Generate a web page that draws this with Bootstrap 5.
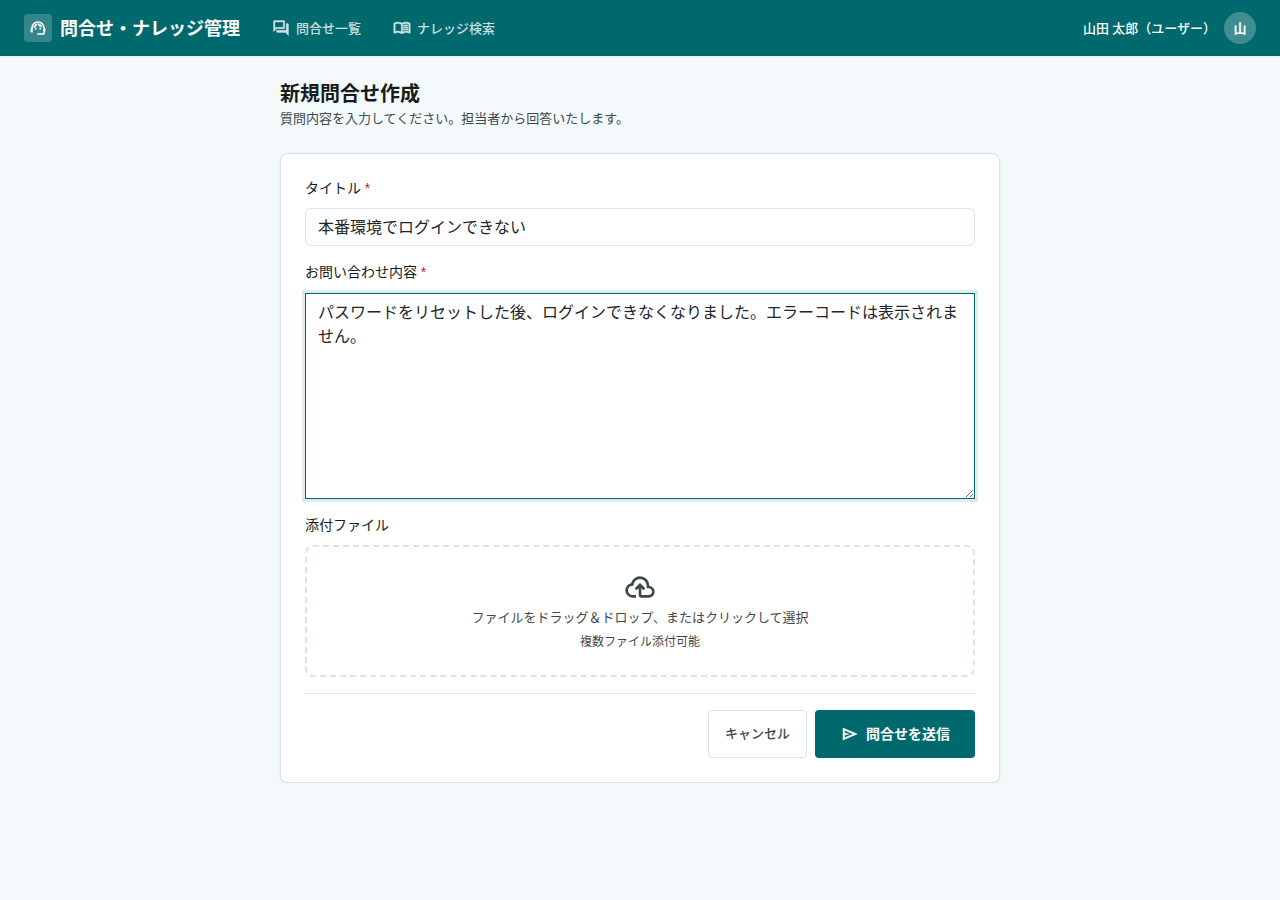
<!DOCTYPE html>
<html lang="ja">
<head>
<meta charset="utf-8">
<meta name="viewport" content="width=device-width, initial-scale=1">
<title>新規問合せ作成</title>
<link rel="stylesheet" href="https://cdn.jsdelivr.net/npm/bootstrap@5.3.0/dist/css/bootstrap.min.css">
<style>
  :root { --teal: #00696e; --ink: #161d1d; --ink-soft: #3f4849; --line: #dae4e4; }
  body { font-family: "Noto Sans", "Noto Sans CJK JP", sans-serif; background: #f4f9fc; color: var(--ink); line-height: 1.6; font-size: 14px; }
  svg { fill: currentColor; flex: none; display: block; }
  .topbar { height: 56px; background: var(--teal); box-shadow: 0 1px 2px rgba(0,0,0,.08); }
  .brand-mark { width: 28px; height: 28px; border-radius: 4px; background: rgba(255,255,255,.2); }
  .brand-name { font-size: 18px; font-weight: 700; }
  .menu-link { gap: 6px; font-size: 13px; font-weight: 500; color: rgba(255,255,255,.8); }
  .menu-link svg { stroke: currentColor; stroke-width: .4; }
  .menu-link svg.book { stroke-width: 18; }
  .user-name { font-size: 13px; font-weight: 500; }
  .avatar { width: 32px; height: 32px; font-size: 13px; font-weight: 700; background: rgba(255,255,255,.25); }
  .page { max-width: 720px; }
  .page-title { font-size: 20px; line-height: 27px; font-weight: 700; margin-bottom: 1px; }
  .page-sub { font-size: 13px; color: var(--ink-soft); }
  .panel { border-color: var(--line) !important; border-radius: 8px; box-shadow: 0 1px 3px rgba(0,0,0,.1); }
  .form-label { display: block; font-size: 14px; line-height: 20px; margin-bottom: 10.400px; }
  .req { color: #ba1a1a; font-family: "Liberation Sans", sans-serif; line-height: 1; }
  .form-control { border-color: var(--line); color: #212529; }
  textarea.form-control, textarea.form-control:focus { border-radius: 0; border-color: var(--teal); box-shadow: 0 0 0 3px rgba(0,105,110,.13); color: #212529; }
  .dropzone { border: 2px dashed var(--line); border-radius: 8px; color: var(--ink-soft); font-size: 13px; }
  .dropzone small { font-size: 12px; display: block; }
  .actions { border-top: 1px solid var(--line); }
  .btn { height: 48px; border-radius: 4px; }
  .btn-cancel, .btn-cancel:hover { font-size: 13px; font-weight: 500; background: #fff; color: var(--ink-soft); border-color: var(--line); padding: 0 16px; }
  .btn-send, .btn-send:hover { font-size: 14px; font-weight: 700; background: var(--teal); color: #fff; padding: 0 24px; }
  .btn-send svg { stroke: currentColor; stroke-width: .6; }
</style>
</head>
<body>
<header class="topbar d-flex align-items-center px-4 text-white">
  <div class="d-flex align-items-center gap-2">
    <span class="brand-mark d-flex align-items-center justify-content-center">
      <svg width="18" height="18" viewBox="0 0 24 24"><path d="M21 12.22C21 6.73 16.74 3 12 3c-4.69 0-9 3.65-9 9.28-.6.34-1 .98-1 1.72v2c0 1.1.9 2 2 2h1v-6.1c0-3.87 3.13-7 7-7s7 3.13 7 7V19h-8v2h8c1.1 0 2-.9 2-2v-1.22c.59-.31 1-.92 1-1.64v-2.3c0-.7-.41-1.31-1-1.62z"/><circle cx="9" cy="13" r="1.200"/><circle cx="15" cy="13" r="1.200"/><path d="M18 11.03C17.52 8.18 15.04 6 12.05 6c-3.03 0-6.29 2.51-6.03 6.45 2.47-1.01 4.33-3.21 4.86-5.89 1.31 2.63 4 4.44 7.12 4.47z"/></svg>
    </span>
    <span class="brand-name">問合せ・ナレッジ管理</span>
  </div>
  <nav class="d-flex gap-3 ms-4">
    <a href="#" class="menu-link d-flex align-items-center px-2 text-decoration-none">
      <svg width="18" height="18" viewBox="0 0 24 24"><path d="M15 4v7H5.17L4 12.17V4h11m1-2H3c-.55 0-1 .45-1 1v14l4-4h10c.55 0 1-.45 1-1V3c0-.55-.45-1-1-1zm5 4h-2v9H6v2c0 .55.45 1 1 1h11l4 4V7c0-.55-.45-1-1-1z"/></svg>
      問合せ一覧
    </a>
    <a href="#" class="menu-link d-flex align-items-center px-2 text-decoration-none">
      <svg class="book" width="18" height="18" viewBox="0 -960 960 960"><path d="M560-564v-68q33-14 67.500-21t72.500-7q26 0 51 4t49 10v64q-24-9-48.500-13.500T700-600q-38 0-73 9.500T560-564Zm0 220v-68q33-14 67.500-21t72.500-7q26 0 51 4t49 10v64q-24-9-48.500-13.500T700-380q-38 0-73 9t-67 27Zm0-110v-68q33-14 67.500-21t72.500-7q26 0 51 4t49 10v64q-24-9-48.500-13.500T700-490q-38 0-73 9.500T560-454ZM260-320q47 0 91.500 10.500T440-278v-394q-41-24-87-36t-93-12q-36 0-71.500 7T120-692v396q35-12 69.500-18t70.500-6Zm260 42q44-21 88.500-31.500T700-320q36 0 70.500 6t69.500 18v-396q-33-14-68.500-21t-71.500-7q-47 0-93 12t-87 36v394Zm-40 118q-48-38-104-59t-116-21q-42 0-82.500 11T100-198q-21 11-40.500-1T40-234v-482q0-11 5.500-21T62-752q46-24 96-36t102-12q58 0 113.500 15T480-740q51-30 106.500-45T700-800q52 0 102 12t96 36q11 5 16.500 15t5.500 21v482q0 23-19.500 35t-40.500 1q-37-20-77.500-31T700-240q-60 0-116 21t-104 59Z"/></svg>
      ナレッジ検索
    </a>
  </nav>
  <div class="d-flex align-items-center gap-2 ms-auto">
    <span class="user-name">山田 太郎（ユーザー）</span>
    <span class="avatar rounded-circle d-flex align-items-center justify-content-center">山</span>
  </div>
</header>

<main class="page mx-auto pt-4">
  <h1 class="page-title">新規問合せ作成</h1>
  <p class="page-sub mb-4">質問内容を入力してください。担当者から回答いたします。</p>
  <form class="panel bg-white border p-4">
    <div class="mb-3">
      <label class="form-label" for="title">タイトル <span class="req">*</span></label>
      <input class="form-control" id="title" type="text" value="本番環境でログインできない">
    </div>
    <div class="mb-3">
      <label class="form-label" for="body">お問い合わせ内容 <span class="req">*</span></label>
      <textarea class="form-control d-block" id="body" rows="8">パスワードをリセットした後、ログインできなくなりました。エラーコードは表示されません。</textarea>
    </div>
    <div class="mb-3">
      <span class="form-label">添付ファイル</span>
      <div class="dropzone p-4 text-center">
        <svg class="mx-auto" width="32" height="32" viewBox="0 -960 960 960"><path d="M260-160q-91 0-155.500-63T40-377q0-78 47-139t123-78q25-92 100-149t170-57q117 0 198.500 81.500T760-520q69 8 114.500 59.500T920-340q0 75-52.500 127.500T740-160H520q-33 0-56.500-23.500T440-240v-206l-64 62-56-56 160-160 160 160-56 56-64-62v206h220q42 0 71-29t29-71q0-42-29-71t-71-29h-60v-80q0-83-58.500-141.500T480-720q-83 0-141.500 58.500T280-520h-20q-58 0-99 41t-41 99q0 58 41 99t99 41h100v80H260Z"/></svg>
        <div class="mt-1">ファイルをドラッグ＆ドロップ、またはクリックして選択</div>
        <small class="mt-1">複数ファイル添付可能</small>
      </div>
    </div>
    <div class="actions d-flex justify-content-end gap-2 pt-3">
      <button type="button" class="btn btn-cancel">キャンセル</button>
      <button type="button" class="btn btn-send d-flex align-items-center gap-2">
        <svg width="18" height="18" viewBox="0 0 24 24"><path d="M4 20V4l19 8-19 8zm2-3l11.850-5L6 7v3.500l6 1.500-6 1.500V17z"/></svg>
        問合せを送信
      </button>
    </div>
  </form>
</main>
<script src="https://cdn.jsdelivr.net/npm/bootstrap@5.3.0/dist/js/bootstrap.bundle.min.js"></script>
</body>
</html>
